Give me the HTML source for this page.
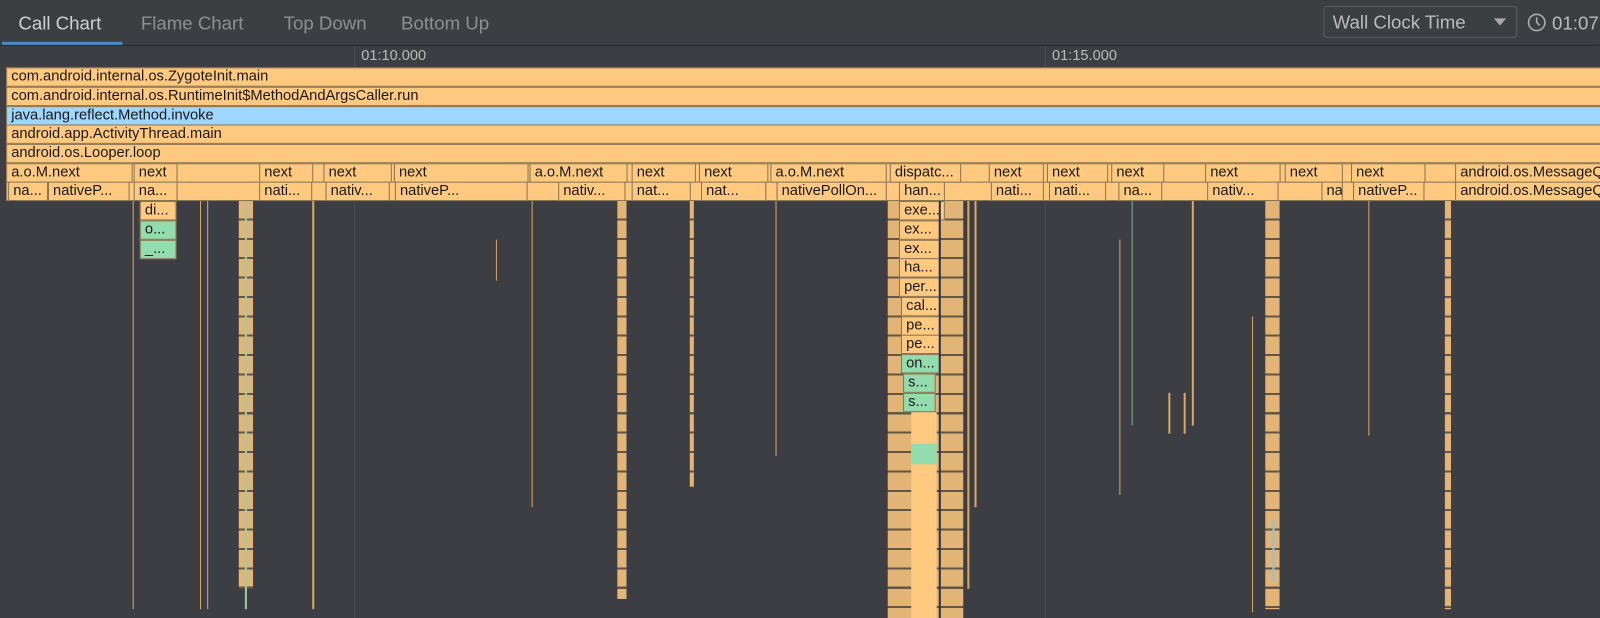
<!DOCTYPE html>
<html><head><meta charset="utf-8"><style>
*{margin:0;padding:0;box-sizing:border-box}
body{width:1600px;height:606px;background:#3c3e43;overflow:hidden;font-family:"Liberation Sans",sans-serif;position:relative}
#w{position:absolute;left:0;top:0;width:1568px;height:594px;transform:scale(1.0204);transform-origin:0 0}
.top{position:absolute;left:0;top:0;width:1568px;height:45px;background:#3c3f41;border-bottom:1px solid #2b2b2b}
.tab{position:absolute;top:12px;font-size:18.3px;color:#8c8f93}
.tick{position:absolute;top:47px;font-size:14.3px;color:#bbb}
.b{position:absolute;height:19px;background:#ffc97f;border:1px solid #8a7452;font-size:14.4px;line-height:17px;padding-left:4px;color:#1a1a1a;white-space:nowrap;overflow:hidden}
.g{background:#93dcae}
.l{background:#9fd6fd}
.v{position:absolute;background:#d9a760;width:2px}
.vg{position:absolute;background:#7fb893;width:2px}
.vb{position:absolute;background:#8ec3e6;width:2px}
.col{position:absolute;opacity:.85;background:repeating-linear-gradient(to bottom,#ffc97f 0,#ffc97f 17px,#6a5a44 17px,#6a5a44 19px)}
</style></head><body><div id="w">
<div class="top">
<div class="tab" style="left:18px;color:#d0d0d0">Call Chart</div>
<div style="position:absolute;left:2px;top:41px;width:118px;height:3px;background:#4a88c7"></div>
<div class="tab" style="left:138px">Flame Chart</div>
<div class="tab" style="left:278px">Top Down</div>
<div class="tab" style="left:393px">Bottom Up</div>
<div style="position:absolute;left:1297px;top:6px;width:190px;height:31px;border:1px solid #5a5c5f;border-radius:3px;background:#3c3f41"></div>
<div class="tab" style="left:1306px;top:11px;color:#bbb">Wall Clock Time</div>
<div style="position:absolute;left:1464px;top:18px;width:0;height:0;border-left:6px solid transparent;border-right:6px solid transparent;border-top:7px solid #aaa"></div>
<svg style="position:absolute;left:1496px;top:12px" width="20" height="20" viewBox="0 0 20 20"><circle cx="10" cy="10" r="8" fill="none" stroke="#aaa" stroke-width="1.6"/><path d="M10 5v5l3 3" fill="none" stroke="#aaa" stroke-width="1.6"/></svg>
<div class="tab" style="left:1521px;color:#bbb">01:07</div>
</div>
<div class="tick" style="left:354px">01:10.000</div>
<div class="tick" style="left:1031px">01:15.000</div>
<div style="position:absolute;left:347px;top:46px;width:1px;height:560px;background:#4a4c51"></div>
<div style="position:absolute;left:1024px;top:46px;width:1px;height:560px;background:#4a4c51"></div>

<div class="b" style="left:6px;top:66px;width:1594px">com.android.internal.os.ZygoteInit.main</div>
<div class="b" style="left:6px;top:85px;width:1594px">com.android.internal.os.RuntimeInit$MethodAndArgsCaller.run</div>
<div class="b l" style="left:6px;top:104px;width:1594px">java.lang.reflect.Method.invoke</div>
<div class="b" style="left:6px;top:122px;width:1594px">android.app.ActivityThread.main</div>
<div class="b" style="left:6px;top:141px;width:1594px">android.os.Looper.loop</div>

<div class="b" style="left:6px;top:160px;width:1594px;padding:0"></div>
<div class="b" style="left:6px;top:178px;width:1594px;padding:0"></div>

<div class="b" style="left:6px;top:160px;width:124px">a.o.M.next</div>
<div class="b" style="left:131px;top:160px;width:43px">next</div>
<div class="b" style="left:254px;top:160px;width:53px">next</div>
<div class="b" style="left:317px;top:160px;width:67px">next</div>
<div class="b" style="left:386px;top:160px;width:132px">next</div>
<div class="b" style="left:519px;top:160px;width:96px">a.o.M.next</div>
<div class="b" style="left:619px;top:160px;width:63px">next</div>
<div class="b" style="left:685px;top:160px;width:68px">next</div>
<div class="b" style="left:755px;top:160px;width:114px">a.o.M.next</div>
<div class="b" style="left:872px;top:160px;width:70px">dispatc...</div>
<div class="b" style="left:969px;top:160px;width:54px">next</div>
<div class="b" style="left:1026px;top:160px;width:60px">next</div>
<div class="b" style="left:1089px;top:160px;width:52px">next</div>
<div class="b" style="left:1181px;top:160px;width:74px">next</div>
<div class="b" style="left:1259px;top:160px;width:57px">next</div>
<div class="b" style="left:1324px;top:160px;width:73px">next</div>
<div class="b" style="left:1426px;top:160px;width:174px">android.os.MessageQ</div>

<div class="b" style="left:8px;top:178px;width:39px">na...</div>
<div class="b" style="left:47px;top:178px;width:80px">nativeP...</div>
<div class="b" style="left:131px;top:178px;width:43px">na...</div>
<div class="b" style="left:254px;top:178px;width:52px">nati...</div>
<div class="b" style="left:319px;top:178px;width:63px">nativ...</div>
<div class="b" style="left:387px;top:178px;width:130px">nativeP...</div>
<div class="b" style="left:547px;top:178px;width:66px">nativ...</div>
<div class="b" style="left:619px;top:178px;width:58px">nat...</div>
<div class="b" style="left:687px;top:178px;width:64px">nat...</div>
<div class="b" style="left:761px;top:178px;width:108px">nativePollOn...</div>
<div class="b" style="left:881px;top:178px;width:45px">han...</div>
<div class="b" style="left:971px;top:178px;width:52px">nati...</div>
<div class="b" style="left:1028px;top:178px;width:56px">nati...</div>
<div class="b" style="left:1096px;top:178px;width:43px">na...</div>
<div class="b" style="left:1183px;top:178px;width:70px">nativ...</div>
<div class="b" style="left:1295px;top:178px;width:21px">na...</div>
<div class="b" style="left:1326px;top:178px;width:70px">nativeP...</div>
<div class="b" style="left:1426px;top:178px;width:174px">android.os.MessageQ</div>

<div class="b" style="left:137px;top:197px;width:36px">di...</div>
<div class="b g" style="left:137px;top:216px;width:36px">o...</div>
<div class="b g" style="left:137px;top:235px;width:36px">_...</div>

<div class="col" style="left:870px;top:197px;width:74px;height:409px"></div>
<div class="b" style="left:881px;top:197px;width:45px">exe...</div>
<div class="b" style="left:881px;top:216px;width:40px">ex...</div>
<div class="b" style="left:881px;top:235px;width:40px">ex...</div>
<div class="b" style="left:881px;top:253px;width:40px">ha...</div>
<div class="b" style="left:881px;top:272px;width:40px">per...</div>
<div class="b" style="left:883px;top:291px;width:38px">cal...</div>
<div class="b" style="left:883px;top:310px;width:38px">pe...</div>
<div class="b" style="left:883px;top:328px;width:38px">pe...</div>
<div class="b g" style="left:883px;top:347px;width:38px">on...</div>
<div class="b g" style="left:885px;top:366px;width:32px">s...</div>
<div class="b g" style="left:885px;top:385px;width:32px">s...</div>
<div style="position:absolute;left:893px;top:404px;width:25px;height:202px;background:#ffc97f"></div>
<div style="position:absolute;left:893px;top:435px;width:25px;height:20px;background:#93dcae"></div>
<div style="position:absolute;left:920px;top:197px;width:2px;height:409px;background:#2b3550"></div>

<div class="col" style="left:234px;top:197px;width:14px;height:380px"></div>
<div class="v" style="left:240px;top:197px;width:2px;height:400px;background:#9fc9a8"></div>
<div class="col" style="left:605px;top:197px;width:9px;height:390px"></div>
<div class="col" style="left:676px;top:197px;width:4px;height:280px"></div>
<div class="col" style="left:1240px;top:197px;width:14px;height:400px"></div>
<div class="vb" style="left:1247px;top:510px;height:60px"></div>
<div class="col" style="left:1416px;top:197px;width:6px;height:400px"></div>
<div class="v" style="left:130px;top:197px;height:400px;width:1px"></div>
<div class="v" style="left:196px;top:197px;height:400px;width:1px"></div>
<div class="v" style="left:203px;top:197px;height:400px;width:1px"></div>
<div class="v" style="left:306px;top:197px;height:400px;width:2px"></div>
<div class="v" style="left:521px;top:197px;height:300px;width:1px"></div>
<div class="v" style="left:760px;top:197px;height:250px;width:1px"></div>
<div class="v" style="left:948px;top:197px;height:380px;width:2px"></div>
<div class="v" style="left:955px;top:197px;height:300px;width:2px"></div>
<div class="v" style="left:1097px;top:235px;height:250px;width:1px"></div>
<div class="vg" style="left:1109px;top:197px;height:220px;width:1px"></div>
<div class="v" style="left:1168px;top:197px;height:220px;width:2px"></div>
<div class="v" style="left:1227px;top:310px;height:290px;width:1px"></div>
<div class="v" style="left:1341px;top:197px;height:230px;width:1px"></div>
<div class="v" style="left:486px;top:235px;height:40px;width:1px"></div>
<div class="v" style="left:1145px;top:385px;height:40px;width:2px"></div>
<div class="v" style="left:1160px;top:385px;height:40px;width:2px"></div>
</div></body></html>
